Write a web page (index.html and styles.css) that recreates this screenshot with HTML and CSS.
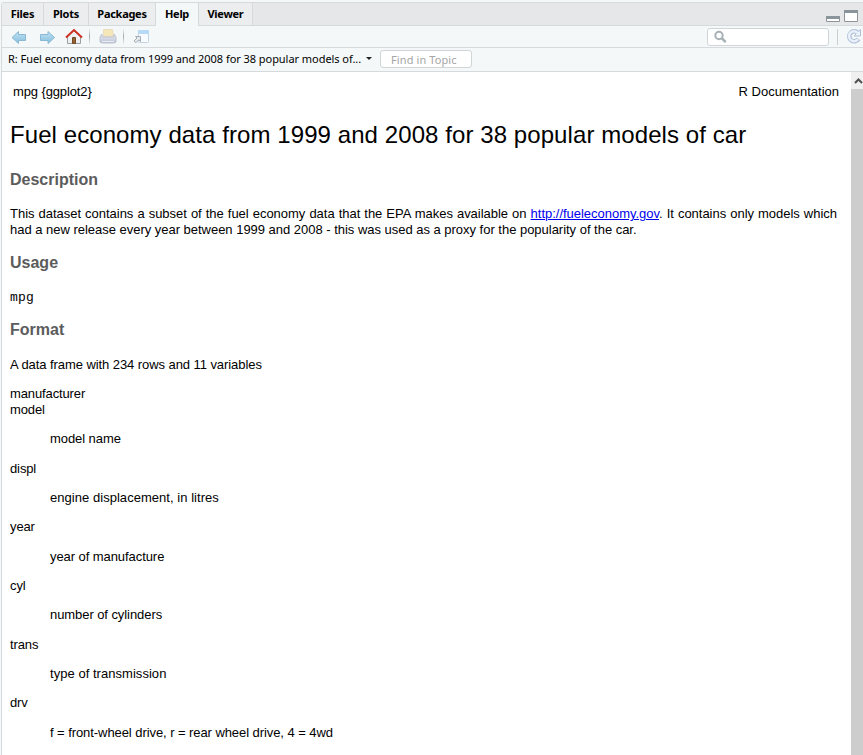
FILE: index.html
```html
<!DOCTYPE html>
<html lang="en">
<head>
<meta charset="utf-8">
<title>Help</title>
<link rel="stylesheet" href="styles.css">
</head>
<body>
<div class="pane">
  <header class="tabs">
    <span class="tab files">Files</span><span class="tab plots">Plots</span><span class="tab packages">Packages</span><span class="tab help active">Help</span><span class="tab viewer">Viewer</span>
    <svg class="window-controls" width="36" height="22" viewBox="0 0 36 22">
      <path fill="#fff" stroke="#8c9499" d="M1.500 13.500h13v5h-13zM19.500 7.500h13v11h-13z"/>
      <path fill="#89949b" d="M1 13h14v3H1zM19 7h14v3H19z"/>
    </svg>
  </header>
  <div class="toolbar">
    <svg class="icons" width="160" height="21" viewBox="0 0 160 21">
      <defs>
        <linearGradient id="blue" x2="0" y2="1"><stop stop-color="#c3e3f3"/><stop offset="1" stop-color="#84bddf"/></linearGradient>
        <linearGradient id="grey" x2="0" y2="1"><stop stop-color="#f2f4fa"/><stop offset="1" stop-color="#b9bfd2"/></linearGradient>
        <linearGradient id="sep" x2="0" y2="1"><stop stop-color="#f4f8f9"/><stop offset=".5" stop-color="#a8a8a8"/><stop offset="1" stop-color="#f4f8f9"/></linearGradient>
      </defs>
      <path fill="url(#blue)" stroke="#88b8d3" d="M10 11.500l6.500-6v3h7v6h-7v3z"/>
      <path fill="url(#blue)" stroke="#88b8d3" d="M52.500 11.500l-6.500-6v3h-7.500v6h7.500v3z"/>
      <path fill="#eef0f2" stroke="#9b9ea2" d="M65.500 10.500l6.500-6 6.500 6v7h-13z"/>
      <path fill="#98622f" stroke="#754a28" d="M70.500 11.500h3v6h-3z"/>
      <path fill="none" stroke="#ce2f20" stroke-width="2" d="M64 11.500L72 4l8 7.500"/>
      <path fill="url(#sep)" d="M87 2h1v17h-1zM121 2h1v17h-1z"/>
      <path fill="#f5e6b8" stroke="#e9ddbc" d="M101.500 3.500h9l1 7h-10z"/>
      <path fill="url(#grey)" stroke="#bdc3d2" d="M100 8l-2 3v5l2 1h12l2-1v-5l-2-3v3h-12z"/>
      <path stroke="#e9edf4" d="M100 15.500h12"/>
      <path fill="#f8fbff" stroke="#c4d3e2" d="M136.500 5.500q0-1 1-1h8q1 0 1 1v10q0 1-1 1h-8q-1 0-1-1z"/>
      <path fill="#b9daf4" d="M136 4h11v4h-11z"/>
      <path fill="#e7ebee" stroke="#a4adb3" d="M133.500 10.500h5v5l-1.700-1.700-3 3-1.800-1.800 3-3z"/>
    </svg>
    <div class="search"><svg width="16" height="15" viewBox="0 0 16 15"><circle cx="6" cy="5.500" r="3.700" fill="none" stroke="#a6b0b5" stroke-width="2"/><path stroke="#a6b0b5" stroke-width="2.600" d="M8.700 8.200l4 4"/></svg></div>
    <i class="separator"></i>
    <svg class="refresh" width="17" height="17" viewBox="0 0 17 17"><path fill="none" stroke="#afbfd6" stroke-width="4.500" d="M12.500 11A5 5 0 1 1 12 5"/><path fill="#edf3fc" stroke="#afbfd6" d="M14.500 1.500v6.500H8l2.500-2.500z"/><path fill="none" stroke="#e9f0fb" stroke-width="2.500" d="M12 11.300A5 5 0 1 1 12 5"/></svg>
  </div>
  <div class="topicbar">
    <span class="topic">R: Fuel economy data from 1999 and 2008 for 38 popular models of...</span>
    <i class="caret"></i>
    <div class="find"><span>Find in Topic</span></div>
  </div>
  <div class="viewport">
    <main>
      <div class="meta"><span class="pkg">mpg {ggplot2}</span><span class="rdoc">R Documentation</span></div>
      <h2>Fuel economy data from 1999 and 2008 for 38 popular models of car</h2>
      <h3>Description</h3>
      <p class="description">This dataset contains a subset of the fuel economy data that the EPA makes available on <a href="#">http://fueleconomy.gov</a>. It contains only models which had a new release every year between 1999 and 2008 - this was used as a proxy for the popularity of the car.</p>
      <h3>Usage</h3>
      <pre>mpg</pre>
      <h3>Format</h3>
      <p class="format">A data frame with 234 rows and 11 variables</p>
      <dl>
        <dt>manufacturer</dt>
        <dt>model</dt><dd>model name</dd>
        <dt>displ</dt><dd class="wide">engine displacement, in litres</dd>
        <dt>year</dt><dd>year of manufacture</dd>
        <dt>cyl</dt><dd>number of cylinders</dd>
        <dt>trans</dt><dd class="wide">type of transmission</dd>
        <dt>drv</dt><dd>f = front-wheel drive, r = rear wheel drive, 4 = 4wd</dd>
      </dl>
    </main>
    <div class="scrollbar"><svg width="12" height="17" viewBox="0 0 12 17"><path fill="none" stroke="#505050" stroke-width="2" d="M4 11l3.500-3.500L11 11"/></svg></div>
  </div>
</div>
</body>
</html>
```
FILE: styles.css
```css
* { box-sizing: border-box; }
body { margin: 0; overflow: hidden; background: #f4f8f9; color: #000; font-family: "Liberation Sans", sans-serif; }
.pane { height: 753px; margin: 2px 0 0 1px; border: 1px solid #d6dadc; border-width: 1px 0 0 1px; border-top-left-radius: 3px; }
.tabs { height: 23px; display: flex; background: #e6e7e8; border-bottom: 1px solid #d6dadc; }
.tab { height: 22px; border-right: 1px solid #d6dadc; background: #ebedef; text-align: center; font: bold 11px/22px "Noto Sans", sans-serif; letter-spacing: -.28px; white-space: nowrap; }
.files { width: 42px; }
.plots { width: 45px; }
.packages { width: 67px; }
.help { width: 43px; }
.viewer { width: 54px; }
.active { height: 23px; background: #f4f8f9; }
.window-controls { margin-left: auto; margin-right: 2px; }
.toolbar { height: 22px; display: flex; align-items: center; border-bottom: 1px solid #d6dadc; }
.search { width: 122px; height: 18px; margin-left: auto; padding: 1px 5px; border: 1px solid #d0d5d8; border-radius: 3px; background: #fff; }
.search svg { display: block; }
.separator { width: 1px; height: 16px; margin: 0 8px; background: #ccc; }
.refresh { flex: none; }
.topicbar { height: 24px; display: flex; align-items: center; border-bottom: 1px solid #d6dadc; font: 11px/20px "Noto Sans", sans-serif; padding-left: 6px; }
.topic { width: 354px; padding-bottom: 2px; letter-spacing: -.05px; white-space: nowrap; }
.caret { width: 0; margin: 0 0 2px 4px; border: 3px solid transparent; border-top-color: #222; border-bottom: 0; }
.find { width: 92px; height: 18px; margin: 0 0 1px 8px; padding-left: 10px; border: 1px solid #d0d5d8; border-radius: 3px; background: #fff; color: #a5a5a5; line-height: 17px; letter-spacing: .1px; white-space: nowrap; }
.viewport { height: 683px; display: flex; background: #fff; }
main { width: 849px; padding: 12px 14px 0 8px; font-size: 13px; line-height: 16px; letter-spacing: -.07px; }
.meta { display: flex; justify-content: space-between; padding-left: 3px; margin-right: -2px; }
.pkg { letter-spacing: -.12px; }
.rdoc { letter-spacing: 0; }
h2 { margin: 19px 0 0; font-size: 24px; line-height: 32px; font-weight: 400; letter-spacing: .08px; white-space: nowrap; }
h3 { margin: 0; color: #5c5c5c; font-size: 16px; line-height: 18px; letter-spacing: 0; }
h2 + h3 { margin-top: 20px; }
p { margin: 17px 0 16px; }
.description { text-align: justify; letter-spacing: -.02px; }
.format { margin: 18px 0 0; }
a { color: #00e; }
pre { margin: 18px 0 15px; font: 13px/16px "Liberation Mono", monospace; letter-spacing: .2px; }
dl { margin: 12.900px 0; }
dt { line-height: 16px; letter-spacing: -.12px; }
dd { margin: 13.333px 0 13.333px 40px; }
.wide { letter-spacing: .04px; }
.scrollbar { width: 12px; background: linear-gradient(#f0f0f0 17px, #cdcdcd 17px); }
.scrollbar svg { display: block; }
```
